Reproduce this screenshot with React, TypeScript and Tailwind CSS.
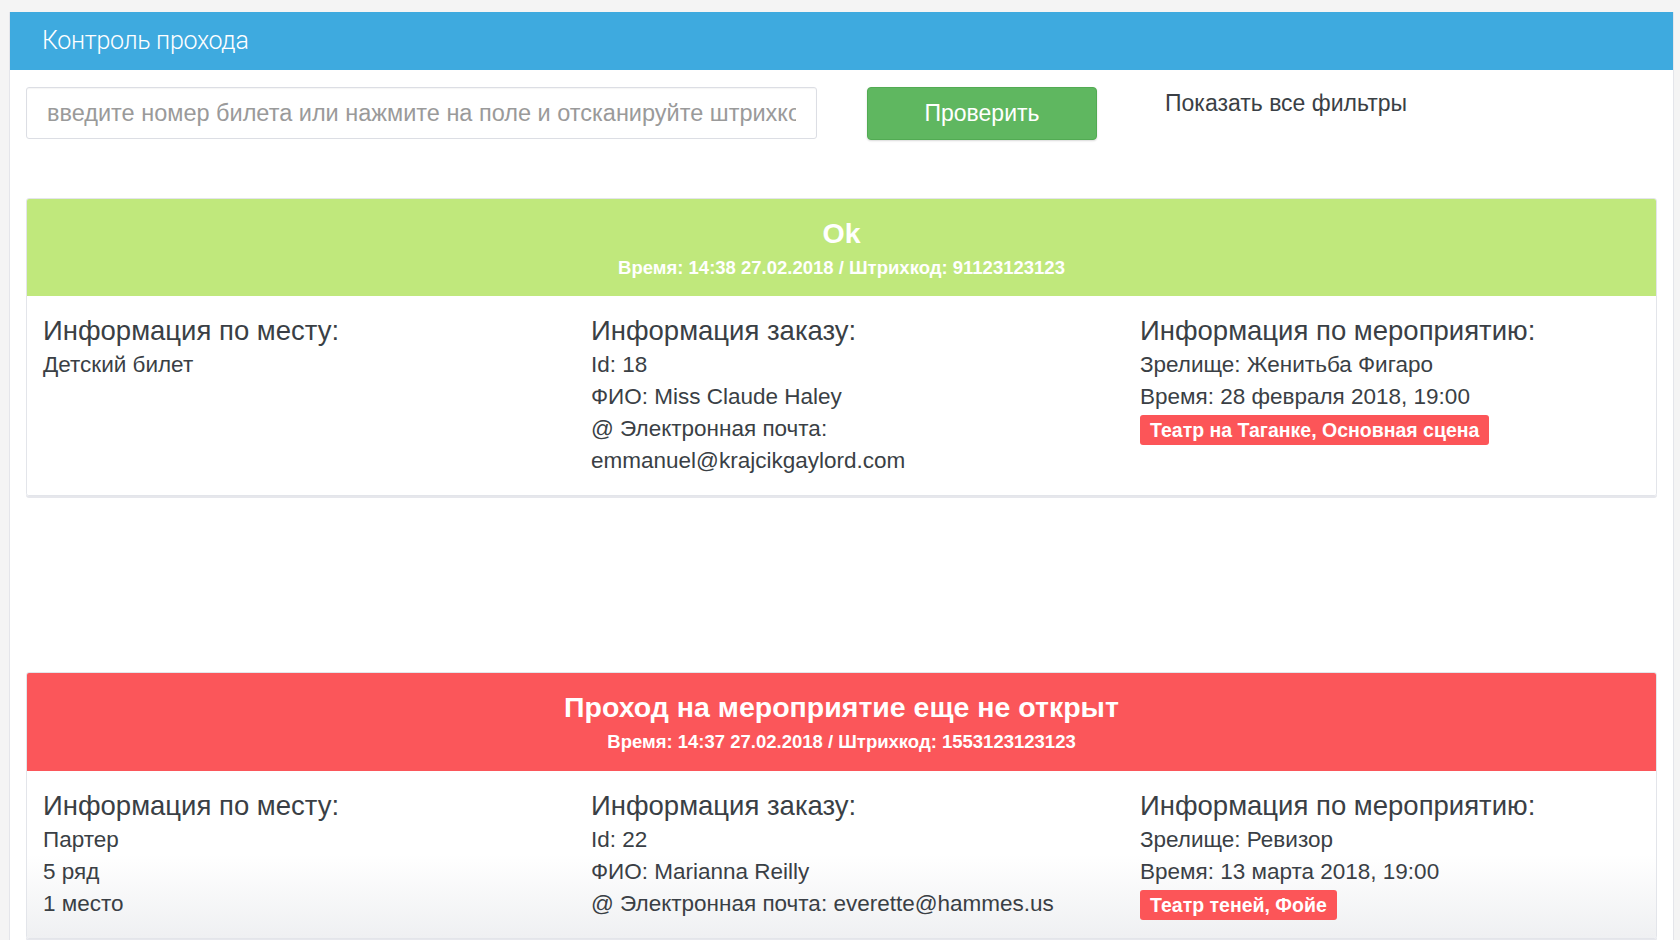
import React from 'react';

type Result = {
  ok: boolean;
  title: string;
  meta: string;
  place: string[];
  order: string[];
  show: string;
  time: string;
  hall: string;
};

const results: Result[] = [
  {
    ok: true,
    title: 'Ok',
    meta: 'Время: 14:38 27.02.2018 / Штрихкод: 91123123123',
    place: ['Детский билет'],
    order: ['Id: 18', 'ФИО: Miss Claude Haley', '@ Электронная почта:', 'emmanuel@krajcikgaylord.com'],
    show: 'Зрелище: Женитьба Фигаро',
    time: 'Время: 28 февраля 2018, 19:00',
    hall: 'Театр на Таганке, Основная сцена',
  },
  {
    ok: false,
    title: 'Проход на мероприятие еще не открыт',
    meta: 'Время: 14:37 27.02.2018 / Штрихкод: 1553123123123',
    place: ['Партер', '5 ряд', '1 место'],
    order: ['Id: 22', 'ФИО: Marianna Reilly', '@ Электронная почта: everette@hammes.us'],
    show: 'Зрелище: Ревизор',
    time: 'Время: 13 марта 2018, 19:00',
    hall: 'Театр теней, Фойе',
  },
];

function Line({ children }: { children: React.ReactNode }) {
  return <div className="h-[32px] leading-[32px] text-[22.5px] text-[#3a3f45] whitespace-nowrap">{children}</div>;
}

function Heading({ children }: { children: React.ReactNode }) {
  return <div className="h-[30px] leading-[30px] mb-[3px] text-[27.5px] text-[#3a3f45] whitespace-nowrap">{children}</div>;
}

function ResultCard({ r }: { r: Result }) {
  return (
    <div className="mx-[16px] rounded-[3px] border border-[#e3e5ea] shadow-[0_2px_0_#e6e7ec] overflow-hidden">
      {/* Status header */}
      <div
        className={
          r.ok
            ? 'h-[97px] bg-[#c0e87c] flex flex-col items-center text-white'
            : 'h-[98px] bg-[#fb565a] flex flex-col items-center text-white'
        }
      >
        <div className="mt-[17px] h-[34px] leading-[34px] text-[28.5px] font-bold">{r.title}</div>
        <div className="mt-[1px] h-[34px] leading-[34px] text-[18.5px] font-bold">{r.meta}</div>
      </div>

      {/* Details */}
      <div
        className={
          r.ok
            ? 'bg-white pl-[16px] pt-[20px] pb-[18px] grid grid-cols-[548px_549px_1fr]'
            : 'bg-gradient-to-b from-white via-white to-[#eff0f2] pl-[16px] pt-[20px] pb-[18px] grid grid-cols-[548px_549px_1fr]'
        }
      >
        <div>
          <Heading>Информация по месту:</Heading>
          {r.place.map((p) => (
            <Line key={p}>{p}</Line>
          ))}
        </div>
        <div>
          <Heading>Информация заказу:</Heading>
          {r.order.map((p) => (
            <Line key={p}>{p}</Line>
          ))}
        </div>
        <div>
          <Heading>Информация по мероприятию:</Heading>
          <Line>{r.show}</Line>
          <Line>{r.time}</Line>
          <div className="mt-[2px]">
            <span className="inline-block h-[30px] leading-[30px] px-[10px] rounded-[3px] bg-[#fc5558] text-white text-[19.5px] font-bold">
              {r.hall}
            </span>
          </div>
        </div>
      </div>
    </div>
  );
}

export default function App() {
  return (
    <div className="min-h-screen bg-[#f4f4f4] pt-[12px] pl-[9px] pr-[6px] font-['Liberation_Sans',Arial,sans-serif]">
      <div className="min-h-[928px] bg-white border-x border-[#e4e5ea]">
        {/* Title bar */}
        <div className="h-[58px] bg-[#3eaadf] flex items-center pl-[32px]">
          <span className="text-white text-[25px] font-light font-['Roboto',sans-serif] tracking-[-0.3px]">
            Контроль прохода
          </span>
        </div>

        {/* Search row */}
        <div className="flex items-start pl-[16px] pt-[17px]">
          <input
            className="w-[791px] h-[52px] border border-[#dcdee4] rounded-[3px] px-[20px] text-[23.5px] text-[#333] placeholder:text-[#9a9a9a] outline-none shadow-[inset_0_1px_1px_rgba(0,0,0,0.04)]"
            placeholder="введите номер билета или нажмите на поле и отсканируйте штрихкод"
          />
          <button className="ml-[50px] w-[230px] h-[53px] rounded-[4px] bg-[#5fb760] border border-[#52ab53] text-white text-[23px] shadow-[0_1px_2px_rgba(0,0,0,0.15)]">
            Проверить
          </button>
          <span className="ml-[68px] mt-[3px] text-[23px] text-[#3a3f45] leading-[26px]">Показать все фильтры</span>
        </div>

        <div className="mt-[58px]">
          <ResultCard r={results[0]} />
        </div>
        <div className="mt-[176px]">
          <ResultCard r={results[1]} />
        </div>
      </div>
    </div>
  );
}
